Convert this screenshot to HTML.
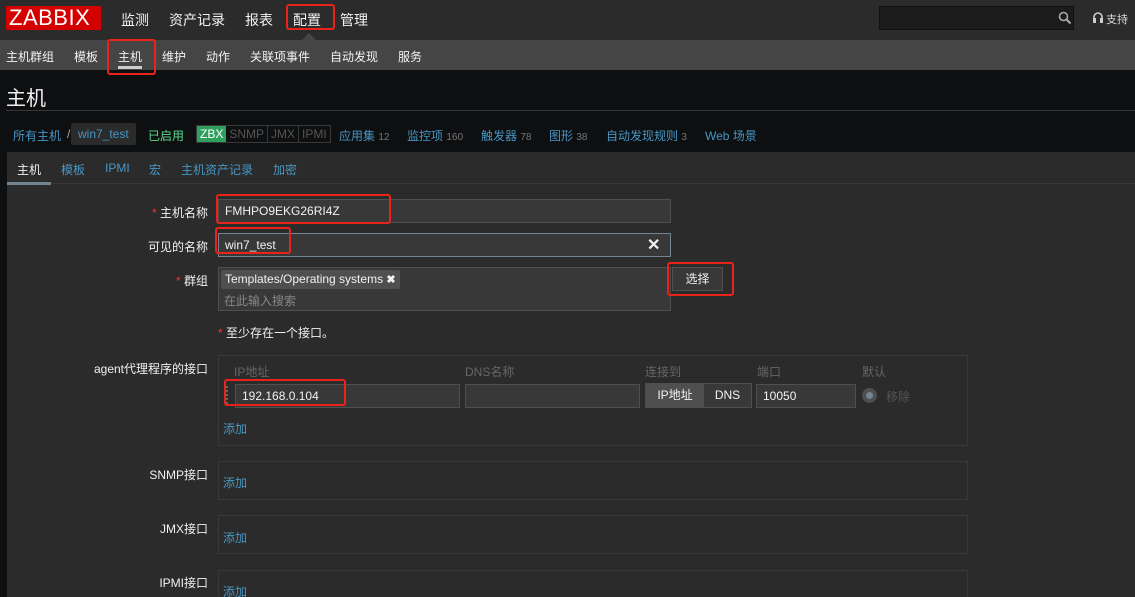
<!DOCTYPE html><html><head><meta charset="utf-8"><style>
*{box-sizing:border-box;margin:0;padding:0}
html,body{width:1135px;height:597px;overflow:hidden}
body{background:#0e0f11;font-family:"Liberation Sans","Noto Sans CJK SC",sans-serif;font-size:12px;color:#f2f2f2;position:relative}
.a{position:absolute;white-space:nowrap}
.top{position:absolute;left:0;top:0;width:1135px;height:40px;background:#2b2b2b}
.sub{position:absolute;left:0;top:40px;width:1135px;height:30px;background:#454545}
.red{position:absolute;border:2px solid #e8231b;border-radius:3px}
.inp{position:absolute;background:#383838;border:1px solid #4f4f4f;height:24px;font-size:12px;padding:4px 6px;color:#f2f2f2}
.lbl{position:absolute;text-align:right;width:200px;left:8px;font-size:12px}
.blue{color:#4796c4}
.gray{color:#737373}
.box{position:absolute;border:1px solid #383838;left:218px;width:750px}
</style></head><body>
<div class="top"></div>
<div class="a" style="left:6px;top:6px;width:95px;height:24px;background:#d40000;color:#fff;font-size:22px;line-height:24px;padding-left:3px;letter-spacing:0.5px">ZABBIX</div>
<div class="a" style="left:121px;top:10px;font-size:14px">监测</div>
<div class="a" style="left:169px;top:10px;font-size:14px">资产记录</div>
<div class="a" style="left:245px;top:10px;font-size:14px">报表</div>
<div class="a" style="left:293px;top:10px;font-size:14px">配置</div>
<div class="a" style="left:340px;top:10px;font-size:14px">管理</div>
<div class="red" style="left:286px;top:4px;width:49px;height:26px"></div>
<div class="a" style="left:302px;top:33px;width:0;height:0;border:7px solid transparent;border-bottom-color:#454545;border-top:0"></div>
<div class="a" style="left:879px;top:6px;width:195px;height:24px;background:#1b1b1b;border:1px solid #111"></div>
<svg class="a" style="left:1058px;top:11px" width="14" height="14"><circle cx="5.5" cy="5.5" r="4" fill="none" stroke="#aaa" stroke-width="1.6"/><line x1="8.5" y1="8.5" x2="12.5" y2="12.5" stroke="#aaa" stroke-width="2"/></svg>
<svg class="a" style="left:1092px;top:11px" width="12" height="13"><path d="M2 9V6a4 4 0 0 1 8 0v3" fill="none" stroke="#ccc" stroke-width="1.6"/><rect x="1" y="7" width="3" height="5" fill="#ccc"/><rect x="8" y="7" width="3" height="5" fill="#ccc"/></svg>
<div class="a" style="left:1106px;top:11px;font-size:11px;color:#ddd">支持</div>
<div class="sub"></div>
<div class="a" style="left:6px;top:48px">主机群组</div>
<div class="a" style="left:74px;top:48px">模板</div>
<div class="a" style="left:118px;top:48px">主机</div>
<div class="a" style="left:118px;top:66px;width:24px;height:3px;background:#ccc"></div>
<div class="red" style="left:107px;top:39px;width:49px;height:36px"></div>
<div class="a" style="left:162px;top:48px">维护</div>
<div class="a" style="left:206px;top:48px">动作</div>
<div class="a" style="left:250px;top:48px">关联项事件</div>
<div class="a" style="left:330px;top:48px">自动发现</div>
<div class="a" style="left:398px;top:48px">服务</div>
<div class="a" style="left:6px;top:82px;font-size:20px">主机</div>
<div class="a" style="left:6px;top:110px;width:1129px;height:1px;background:#383838"></div>
<div class="a blue" style="left:13px;top:127px">所有主机</div>
<div class="a" style="left:67px;top:127px;color:#aaa">/</div>
<div class="a blue" style="left:71px;top:123px;height:22px;padding:4px 7px;background:#2b2b2b;border-radius:2px;font-size:12px">win7_test</div>
<div class="a" style="left:148px;top:127px;color:#59db8f">已启用</div>
<div class="a" style="left:196px;top:125px;height:18px;border:1px solid #383838;font-size:12px;line-height:16px;display:flex">
<span style="background:#2f9f5e;color:#fff;padding:0 3px">ZBX</span><span style="color:#555;padding:0 3px;border-right:1px solid #383838">SNMP</span><span style="color:#555;padding:0 3px;border-right:1px solid #383838">JMX</span><span style="color:#555;padding:0 3px">IPMI</span></div>
<div class="a blue" style="left:339px;top:127px">应用集 <span style="color:#777;font-size:10px">12</span></div>
<div class="a blue" style="left:407px;top:127px">监控项 <span style="color:#777;font-size:10px">160</span></div>
<div class="a blue" style="left:481px;top:127px">触发器 <span style="color:#777;font-size:10px">78</span></div>
<div class="a blue" style="left:549px;top:127px">图形 <span style="color:#777;font-size:10px">38</span></div>
<div class="a blue" style="left:606px;top:127px">自动发现规则 <span style="color:#777;font-size:10px">3</span></div>
<div class="a blue" style="left:705px;top:127px">Web 场景</div>
<div class="a" style="left:7px;top:152px;width:1128px;height:445px;background:#2b2b2b"></div>
<div class="a" style="left:7px;top:183px;width:1128px;height:1px;background:#383838"></div>
<div class="a" style="left:17px;top:161px">主机</div>
<div class="a" style="left:7px;top:182px;width:44px;height:3px;background:#748592"></div>
<div class="a blue" style="left:61px;top:161px">模板</div>
<div class="a blue" style="left:105px;top:161px">IPMI</div>
<div class="a blue" style="left:149px;top:161px">宏</div>
<div class="a blue" style="left:181px;top:161px">主机资产记录</div>
<div class="a blue" style="left:273px;top:161px">加密</div>

<div class="lbl" style="top:204px"><span style="color:#e33">*</span> 主机名称</div>
<div class="inp" style="left:218px;top:199px;width:453px">FMHPO9EKG26RI4Z</div>
<div class="red" style="left:216px;top:194px;width:175px;height:30px"></div>
<div class="lbl" style="top:238px">可见的名称</div>
<div class="inp" style="left:218px;top:233px;width:453px;border-color:#748592">win7_test</div>
<div class="a" style="left:647px;top:235px;font-size:16px;font-weight:bold">✕</div>
<div class="red" style="left:215px;top:227px;width:76px;height:27px"></div>
<div class="lbl" style="top:272px"><span style="color:#e33">*</span> 群组</div>
<div class="inp" style="left:218px;top:267px;width:453px;height:44px"></div>
<div class="a" style="left:221px;top:270px;height:19px;background:#4f4f4f;padding:2px 4px;border-radius:2px">Templates/Operating systems <b style="font-size:11px">✖</b></div>
<div class="a gray" style="left:224px;top:292px;color:#888">在此输入搜索</div>
<div class="a" style="left:672px;top:267px;width:51px;height:24px;background:#383838;border:1px solid #4f4f4f;text-align:center;line-height:22px">选择</div>
<div class="red" style="left:667px;top:262px;width:67px;height:34px"></div>
<div class="a" style="left:218px;top:324px"><span style="color:#e33">*</span> 至少存在一个接口。</div>

<div class="lbl" style="top:360px">agent代理程序的接口</div>
<div class="box" style="top:355px;height:91px"></div>
<div class="a gray" style="left:234px;top:363px;color:#666">IP地址</div>
<div class="a gray" style="left:465px;top:363px;color:#666">DNS名称</div>
<div class="a gray" style="left:645px;top:363px;color:#666">连接到</div>
<div class="a gray" style="left:757px;top:363px;color:#666">端口</div>
<div class="a gray" style="left:862px;top:363px;color:#666">默认</div>
<div class="a" style="left:226px;top:386px;width:2px;height:18px;border-left:2px dotted #666"></div>
<div class="inp" style="left:235px;top:384px;width:225px">192.168.0.104</div>
<div class="red" style="left:224px;top:379px;width:122px;height:27px"></div>
<div class="inp" style="left:465px;top:384px;width:175px"></div>
<div class="a" style="left:645px;top:383px;width:107px;height:25px;border:1px solid #4f4f4f;display:flex;line-height:23px">
<span style="background:#4f4f4f;width:58px;text-align:center">IP地址</span><span style="background:#383838;flex:1;text-align:center">DNS</span></div>
<div class="inp" style="left:756px;top:384px;width:100px">10050</div>
<div class="a" style="left:862px;top:388px;width:15px;height:15px;border-radius:50%;background:#4f4f4f"></div>
<div class="a" style="left:866px;top:392px;width:7px;height:7px;border-radius:50%;background:#748592"></div>
<div class="a" style="left:886px;top:388px;color:#555">移除</div>
<div class="a blue" style="left:223px;top:420px">添加</div>

<div class="lbl" style="top:466px">SNMP接口</div>
<div class="box" style="top:461px;height:39px"></div>
<div class="a blue" style="left:223px;top:474px">添加</div>
<div class="lbl" style="top:520px">JMX接口</div>
<div class="box" style="top:515px;height:39px"></div>
<div class="a blue" style="left:223px;top:529px">添加</div>
<div class="lbl" style="top:574px">IPMI接口</div>
<div class="box" style="top:570px;height:27px;border-bottom:0"></div>
<div class="a blue" style="left:223px;top:583px">添加</div>
</body></html>
